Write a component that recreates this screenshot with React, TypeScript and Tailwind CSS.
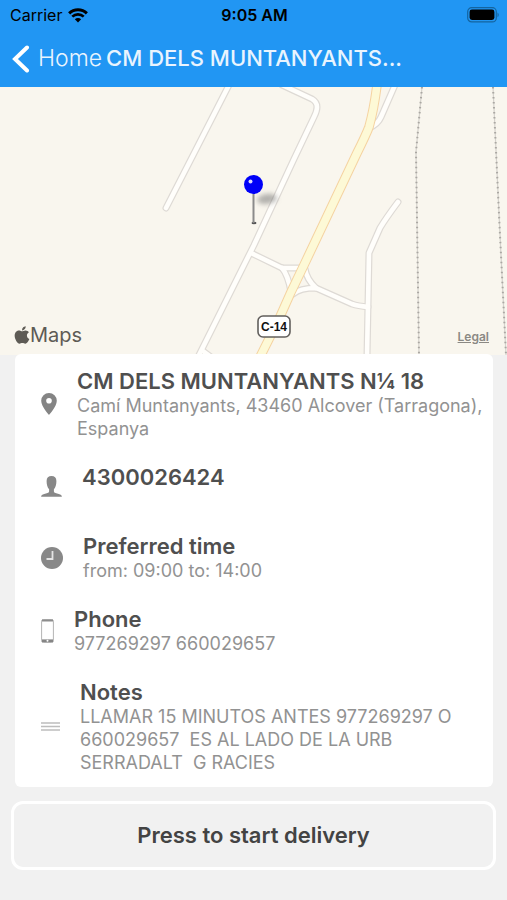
import type { ReactNode } from "react";
import { FaApple } from "react-icons/fa";

function StatusBar() {
  return (
    <div className="grid grid-cols-3 items-center h-[30px] pl-[10px] pr-2 text-black">
      <div className="flex items-center gap-[6px]">
        <span className="text-base">Carrier</span>
        <svg width="20" height="15" viewBox="0 0 21 15" fill="none" stroke="currentColor" aria-hidden="true">
          <path d="M1.200 5.200a13.400 13.400 0 0 1 18.600 0" strokeWidth="3.200" />
          <path d="M4.500 8.700a8.600 8.600 0 0 1 12 0" strokeWidth="2.800" />
          <path d="M10.500 14.800 7.200 11.500a4.700 4.700 0 0 1 6.600 0z" fill="currentColor" stroke="none" />
        </svg>
      </div>
      <div className="text-center text-base font-semibold">9:05 AM</div>
      <svg className="justify-self-end" width="33" height="16" viewBox="0 0 33 16" aria-hidden="true">
        <rect x="1.700" y="0.700" width="28.600" height="14.200" rx="4" fill="none" stroke="#14649f" strokeWidth="1.200" />
        <rect x="3.600" y="2.600" width="24.800" height="10.400" rx="2.400" fill="#000" />
        <path d="M31.500 5.400c1.600.8 1.600 4 0 4.800z" fill="#14649f" />
      </svg>
    </div>
  );
}

function NavBar() {
  return (
    <nav className="flex items-center h-[57px] px-3 text-[#e9f4fe]">
      <a href="#home" className="flex items-center gap-2 shrink-0">
        <svg width="18" height="28" viewBox="0 0 18 28" fill="none" stroke="#fff" strokeWidth="4" aria-hidden="true">
          <path d="M15 2.500 3 14l12 11.500" strokeLinecap="round" strokeLinejoin="miter" />
        </svg>
        <span className="text-[23px] font-light">Home</span>
      </a>
      <h1 className="ml-1 whitespace-nowrap text-[22px] font-medium">CM DELS MUNTANYANTS...</h1>
    </nav>
  );
}

const roads = [
  "M229 -2 166 121",
  "M282 -2 312 12Q317 15 317 20Q317 24 314 30L294 72 254 158 198 270",
  "M395 -2 381 30Q378 37 369 41",
  "M251 166 282 181H299",
  "M282 181Q288 188 291 205",
  "M305 182Q307 193 316 201",
  "M293 207Q300 201 316 201L352 217Q358 219 368 220",
  "M398 115Q386 131 380 141L369 166 367 270",
  "M203 264 211 270",
];
const highway = "M377 -2Q374 22 369 40Q366 48 357 66L304 178 291 205 279 232 259 272";
const boundaries = ["M422 0 416 65 419 268", "M493 0 500 148 506 268"];

function DeliveryMap() {
  return (
    <section className="relative h-[268px] overflow-hidden bg-[#f9f6ee]" aria-label="Map">
      <svg className="h-full w-full" viewBox="0 0 507 268" preserveAspectRatio="xMidYMid slice" fill="none">
        <defs>
          <filter id="soft" x="-50%" y="-100%" width="200%" height="300%">
            <feGaussianBlur stdDeviation="2.5" />
          </filter>
        </defs>
        <g stroke="#dedad5" strokeWidth="7" strokeLinecap="round" strokeLinejoin="round">
          {roads.map((d) => <path key={d} d={d} />)}
        </g>
        <g stroke="#fffefb" strokeWidth="4.6" strokeLinecap="round" strokeLinejoin="round">
          {roads.map((d) => <path key={d} d={d} />)}
        </g>
        <path d={highway} stroke="#f5d3a1" strokeWidth="9.6" />
        <path d={highway} stroke="#fdf9d6" strokeWidth="7.6" />
        {boundaries.map((d) => (
          <g key={d}>
            <path d={d} stroke="#d5d2cc" strokeWidth="1.2" />
            <path d={d} stroke="#aaa7a2" strokeWidth="2" strokeDasharray="1.5 3.5" />
          </g>
        ))}
        <ellipse cx="267" cy="112" rx="10" ry="5" fill="#777" opacity="0.55" filter="url(#soft)" transform="rotate(-8 267 112)" />
        <ellipse cx="254" cy="136" rx="2.5" ry="1.2" fill="#555" />
        <path d="M253.5 104v32" stroke="#8b8b8b" strokeWidth="2" />
        <circle cx="253.5" cy="97.5" r="9.5" fill="#0000f8" />
        <circle cx="250.5" cy="94.5" r="2" fill="#d9d9ff" />
        <rect x="258" y="229" width="32" height="21" rx="5" fill="#fff" stroke="#625f5c" strokeWidth="1.6" />
        <text
          x="274"
          y="244"
          textAnchor="middle"
          fill="#111"
          className="text-[12px] font-bold font-['Liberation_Sans',sans-serif]"
        >
          C-14
        </text>
      </svg>
      <div className="absolute left-3 bottom-2 flex items-center text-[#5e5b55]">
        <FaApple className="size-5 -mr-0.5" />
        <span className="text-xl leading-6">Maps</span>
      </div>
      <a href="#legal" className="absolute right-[18px] bottom-[10px] text-xs font-semibold text-[#8b8984] underline">
        Legal
      </a>
    </section>
  );
}

function PinIcon() {
  return (
    <svg width="16" height="22" viewBox="0 0 16 22" className="shrink-0" aria-hidden="true">
      <path
        fill="#848484"
        fillRule="evenodd"
        d="M8 0a7.800 7.800 0 0 0-7.800 7.800C.2 13.500 8 22 8 22s7.800-8.500 7.800-14.200A7.800 7.800 0 0 0 8 0zm0 5a2.800 2.800 0 1 1 0 5.600A2.800 2.800 0 0 1 8 5z"
      />
    </svg>
  );
}

function PersonIcon() {
  return (
    <svg width="21" height="21" viewBox="0 0 21 21" className="shrink-0" aria-hidden="true">
      <path
        fill="#888"
        d="M10.500 0C7.400 0 5.600 1.700 5.600 5c0 3.500.8 6.600 2.500 8.200v2.300c0 1.400-2.600 1.900-4.900 2.500C1.300 18.500.2 19.200.1 20.800h20.800c-.1-1.600-1.200-2.300-3.100-2.800-2.300-.6-4.900-1.100-4.900-2.500v-2.300c1.700-1.600 2.500-4.700 2.500-8.200 0-3.300-1.800-5-4.900-5z"
      />
    </svg>
  );
}

function ClockIcon() {
  return (
    <svg width="22" height="22" viewBox="0 0 22 22" fill="none" className="shrink-0" aria-hidden="true">
      <circle cx="11" cy="11" r="11" fill="#888" />
      <path d="M11.500 4v8H5.500" stroke="#e4e4e4" strokeWidth="1.800" />
    </svg>
  );
}

function PhoneIcon() {
  return (
    <svg width="13" height="24" viewBox="0 0 13 24" fill="none" className="shrink-0" aria-hidden="true">
      <rect x="0.600" y="0.600" width="11.800" height="22.800" rx="1.600" fill="#fff" stroke="#b4b4b4" />
      <path d="M1 1.500h11" stroke="#8d8d8d" strokeWidth="2" />
      <path d="M1 21.800h11" stroke="#858585" strokeWidth="2.800" />
      <circle cx="6.500" cy="21.800" r="1" fill="#fff" />
    </svg>
  );
}

function NotesIcon() {
  return (
    <svg width="19" height="9" viewBox="0 0 19 9" className="shrink-0" aria-hidden="true">
      <path d="M0 1h19M0 4.500h19M0 8h19" stroke="#bdbdbd" strokeWidth="1.600" />
    </svg>
  );
}

type RowProps = {
  icon: ReactNode;
  title: string;
  children?: ReactNode;
};

function InfoRow({ icon, title, children }: RowProps) {
  return (
    <li className="flex items-center gap-5 min-h-[45px]">
      {icon}
      <div className="min-w-0 flex-1 self-start">
        <h2 className="text-[22px] leading-[26px] font-semibold text-[#4f4f4f]">{title}</h2>
        {children && (
          <p className="text-lg leading-[23px] text-[#929292] whitespace-pre-wrap">{children}</p>
        )}
      </div>
    </li>
  );
}

export default function App() {
  return (
    <div className="min-h-screen bg-[#f1f1f1] font-[Inter,'Liberation_Sans',sans-serif]">
      <header className="bg-[#2196f3]">
        <StatusBar />
        <NavBar />
      </header>
      <main>
        <DeliveryMap />
        <ul className="relative -mt-px ml-[15px] mr-[14px] flex flex-col gap-6 rounded-md bg-white pt-[14px] pb-[13px] pl-[26px]">
          <InfoRow icon={<PinIcon />} title="CM DELS MUNTANYANTS N¼ 18">
            Camí Muntanyants, 43460 Alcover (Tarragona), Espanya
          </InfoRow>
          <InfoRow icon={<PersonIcon />} title="4300026424" />
          <InfoRow icon={<ClockIcon />} title="Preferred time">
            from: 09:00 to: 14:00
          </InfoRow>
          <InfoRow icon={<PhoneIcon />} title="Phone">
            977269297 660029657
          </InfoRow>
          <InfoRow icon={<NotesIcon />} title="Notes">
            {"LLAMAR 15 MINUTOS ANTES 977269297 O 660029657  ES AL LADO DE LA URB SERRADALT  G RACIES"}
          </InfoRow>
        </ul>
        <div className="px-[11px] pt-[14px]">
          <button
            type="button"
            className="h-[69px] w-full rounded-xl border-3 border-white text-[22px] font-semibold text-[#434343]"
          >
            Press to start delivery
          </button>
        </div>
      </main>
    </div>
  );
}
